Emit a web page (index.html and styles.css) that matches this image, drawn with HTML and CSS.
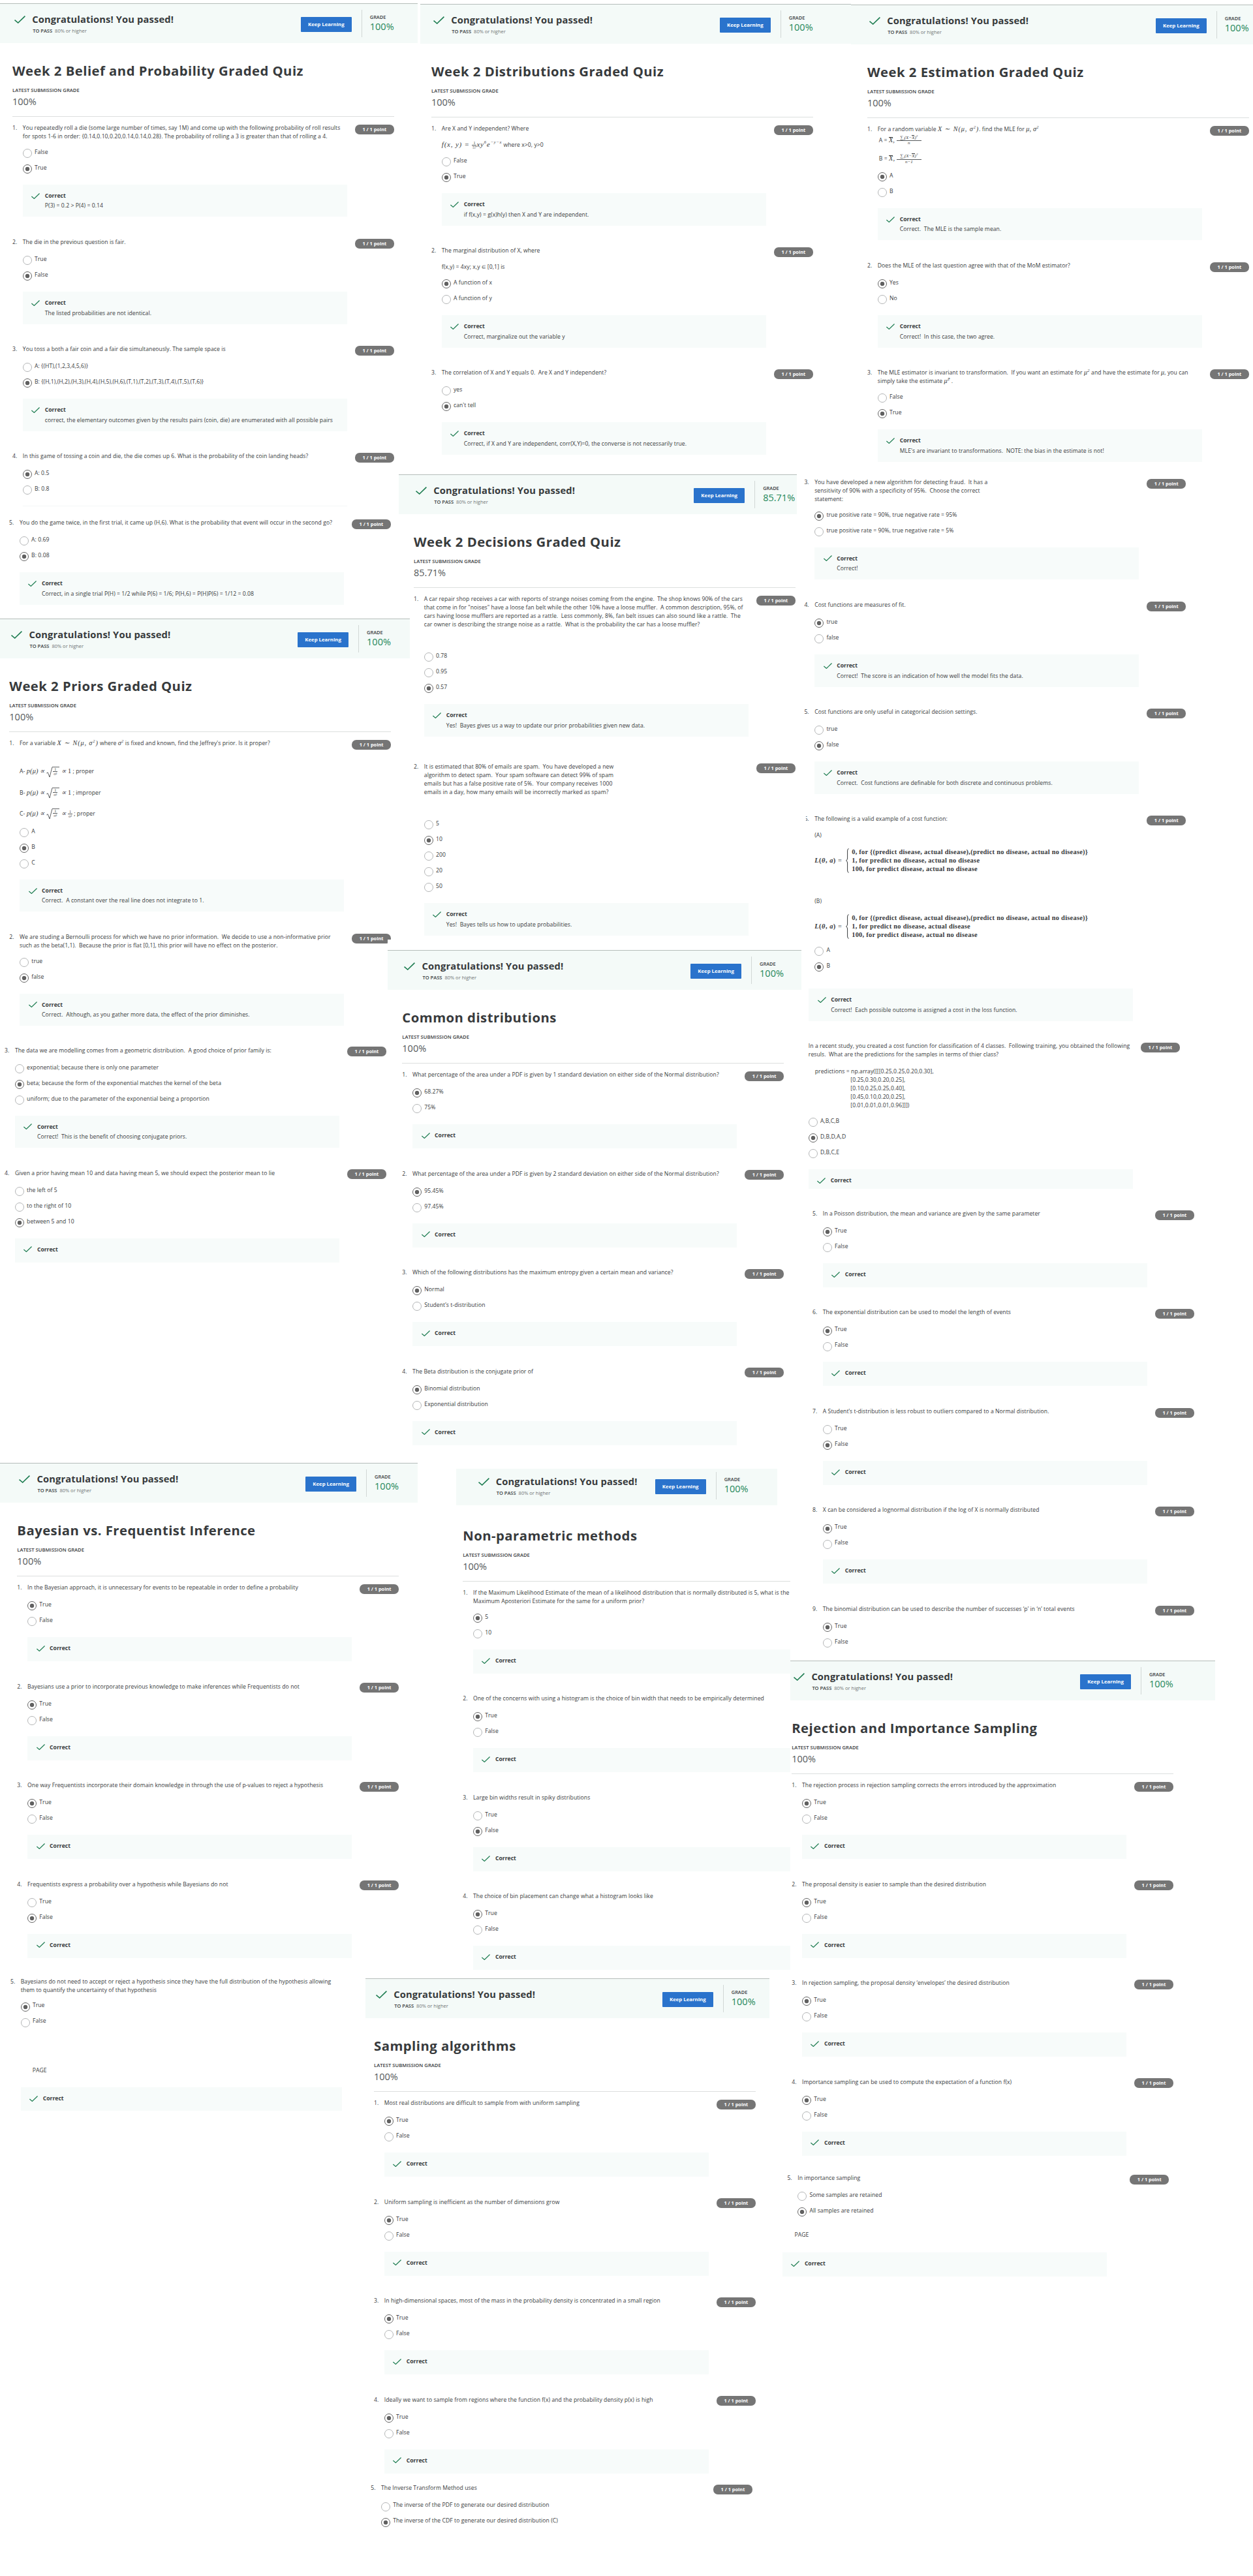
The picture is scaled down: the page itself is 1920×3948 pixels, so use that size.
FILE: index.html
```html
<!DOCTYPE html>
<html lang="en">
<head>
<meta charset="utf-8">
<title>Graded quizzes</title>
<link rel="stylesheet" href="styles.css">
</head>
<body>
<svg class="defs" aria-hidden="true">
  <symbol id="tick" viewBox="0 0 17 12"><path d="M.5 6.6 5.7 11 16.4.7" fill="none" stroke="#1d7c50" stroke-width="1.6"/></symbol>
  <symbol id="brace" viewBox="0 0 5 38"><path d="M4.6.6Q2.6.8 2.6 4V15Q2.6 18.4.5 19 2.6 19.6 2.6 23V34Q2.6 37.2 4.6 37.4" fill="none" stroke="#373a3c" stroke-width="1"/></symbol>
  <symbol id="root" viewBox="0 0 20 17"><path d="M.3 10 2.2 8.8 5 16 9 .6H20" fill="none" stroke="#373a3c" stroke-width=".8"/></symbol>
</svg>
<main class="board">

<article class="sheet sheet--belief">
  <header class="banner"><div class="banner-in"><svg class="tick-lg"><use href="#tick"/></svg><div class="congrats"><h2>Congratulations! You passed!</h2><p><b>TO PASS</b>80% or higher</p></div><button class="learn">Keep Learning</button><div class="grade"><b>GRADE</b><span>100%</span></div></div></header>
  <div class="content">
    <h1>Week 2 Belief and Probability Graded Quiz</h1><p class="latest">LATEST SUBMISSION GRADE</p><p class="score">100%</p><hr>
    <section class="q"><span class="num">1.</span><span class="pill">1 / 1 point</span><div class="prompt">You repeatedly roll a die (some large number of times, say 1M) and come up with the following probability of roll results<br>for spots 1-6 in order: {0.14,0.10,0.20,0.14,0.14,0.28}. The probability of rolling a 3 is greater than that of rolling a 4.</div>
      <ul><li>False</li><li class="on">True</li></ul>
      <div class="fb"><svg><use href="#tick"/></svg><b>Correct</b><p>P(3) = 0.2 &gt; P(4) = 0.14</p></div></section>
    <section class="q"><span class="num">2.</span><span class="pill">1 / 1 point</span><div class="prompt">The die in the previous question is fair.</div>
      <ul><li>True</li><li class="on">False</li></ul>
      <div class="fb"><svg><use href="#tick"/></svg><b>Correct</b><p>The listed probabilities are not identical.</p></div></section>
    <section class="q"><span class="num">3.</span><span class="pill">1 / 1 point</span><div class="prompt">You toss a both a fair coin and a fair die simultaneously. The sample space is</div>
      <ul><li>A: {(HT),(1,2,3,4,5,6)}</li><li class="on">B: {(H,1),(H,2),(H,3),(H,4),(H,5),(H,6),(T,1),(T,2),(T,3),(T,4),(T,5),(T,6)}</li></ul>
      <div class="fb"><svg><use href="#tick"/></svg><b>Correct</b><p>correct, the elementary outcomes given by the results pairs (coin, die) are enumerated with all possible pairs</p></div></section>
    <section class="q"><span class="num">4.</span><span class="pill">1 / 1 point</span><div class="prompt">In this game of tossing a coin and die, the die comes up 6. What is the probability of the coin landing heads?</div>
      <ul><li class="on">A: 0.5</li><li>B: 0.8</li></ul>
      <div class="fb-edge"></div></section>
    <section class="q q--belief5"><span class="num">5.</span><span class="pill">1 / 1 point</span><div class="prompt">You do the game twice, in the first trial, it came up (H,6). What is the probability that event will occur in the second go?</div>
      <ul><li>A: 0.69</li><li class="on">B: 0.08</li></ul>
      <div class="fb"><svg><use href="#tick"/></svg><b>Correct</b><p>Correct, in a single trial P(H) = 1/2 while P(6) = 1/6; P(H,6) = P(H)P(6) = 1/12 = 0.08</p></div></section>
  </div>
</article>

<article class="sheet sheet--distributions">
  <header class="banner"><div class="banner-in"><svg class="tick-lg"><use href="#tick"/></svg><div class="congrats"><h2>Congratulations! You passed!</h2><p><b>TO PASS</b>80% or higher</p></div><button class="learn">Keep Learning</button><div class="grade"><b>GRADE</b><span>100%</span></div></div></header>
  <div class="content">
    <h1>Week 2 Distributions Graded Quiz</h1><p class="latest">LATEST SUBMISSION GRADE</p><p class="score">100%</p><hr>
    <section class="q"><span class="num">1.</span><span class="pill">1 / 1 point</span><div class="prompt">Are X and Y independent? Where
      <p class="para"><span class="math math--pdf">f(x, y) = <span class="frac"><span>1</span><span>57</span></span>xy<sup>6</sup>e<sup>−y−x</sup></span> where x&gt;0, y&gt;0</p></div>
      <ul><li>False</li><li class="on">True</li></ul>
      <div class="fb"><svg><use href="#tick"/></svg><b>Correct</b><p>if f(x,y) = g(x)h(y) then X and Y are independent.</p></div></section>
    <section class="q"><span class="num">2.</span><span class="pill">1 / 1 point</span><div class="prompt">The marginal distribution of X, where
      <p class="para">f(x,y) = 4xy; x,y <span class="sym">∈</span> [0,1] is</p></div>
      <ul><li class="on">A function of x</li><li>A function of y</li></ul>
      <div class="fb"><svg><use href="#tick"/></svg><b>Correct</b><p>Correct, marginalize out the variable y</p></div></section>
    <section class="q"><span class="num">3.</span><span class="pill">1 / 1 point</span><div class="prompt">The correlation of X and Y equals 0.&nbsp; Are X and Y independent?</div>
      <ul><li>yes</li><li class="on">can't tell</li></ul>
      <div class="fb"><svg><use href="#tick"/></svg><b>Correct</b><p>Correct, if X and Y are independent, corr(X,Y)=0, the converse is not necessarily true.</p></div></section>
  </div>
</article>

<article class="sheet sheet--estimation">
  <header class="banner"><div class="banner-in"><svg class="tick-lg"><use href="#tick"/></svg><div class="congrats"><h2>Congratulations! You passed!</h2><p><b>TO PASS</b>80% or higher</p></div><button class="learn">Keep Learning</button><div class="grade"><b>GRADE</b><span>100%</span></div></div></header>
  <div class="content">
    <h1>Week 2 Estimation Graded Quiz</h1><p class="latest">LATEST SUBMISSION GRADE</p><p class="score">100%</p><hr>
    <section class="q"><span class="num">1.</span><span class="pill">1 / 1 point</span><div class="prompt">For a random variable <span class="math math--norm">X ∼ N(μ, σ<sup>2</sup>)</span>. find the MLE for <span class="math">μ, σ<sup>2</sup></span>
      <p class="est">A = <span class="math"><span class="bar">X</span>, <span class="frac frac--wide"><span>∑<sub>i</sub>(X−<span class="bar">X</span>)<sup>2</sup></span><span>n</span></span></span></p>
      <p class="est est--b">B = <span class="math"><span class="bar">X</span>, <span class="frac frac--wide"><span>∑<sub>i</sub>(X−<span class="bar">X</span>)<sup>2</sup></span><span>n−1</span></span></span></p></div>
      <ul><li class="on">A</li><li>B</li></ul>
      <div class="fb"><svg><use href="#tick"/></svg><b>Correct</b><p>Correct.&nbsp; The MLE is the sample mean.</p></div></section>
    <section class="q"><span class="num">2.</span><span class="pill">1 / 1 point</span><div class="prompt">Does the MLE of the last question agree with that of the MoM estimator?</div>
      <ul><li class="on">Yes</li><li>No</li></ul>
      <div class="fb"><svg><use href="#tick"/></svg><b>Correct</b><p>Correct!&nbsp; In this case, the two agree.</p></div></section>
    <section class="q"><span class="num">3.</span><span class="pill">1 / 1 point</span><div class="prompt">The MLE estimator is invariant to transformation.&nbsp; If you want an estimate for <span class="math">μ<sup>2</sup></span> and have the estimate for <span class="math">μ</span>, you can<br>simply take the estimate <span class="math">μ̂<sup>2</sup></span> .</div>
      <ul><li>False</li><li class="on">True</li></ul>
      <div class="fb"><svg><use href="#tick"/></svg><b>Correct</b><p>MLE's are invariant to transformations.&nbsp; NOTE: the bias in the estimate is not!</p></div></section>
  </div>
</article>

<article class="sheet sheet--decisions">
  <header class="banner"><div class="banner-in"><svg class="tick-lg"><use href="#tick"/></svg><div class="congrats"><h2>Congratulations! You passed!</h2><p><b>TO PASS</b>80% or higher</p></div><button class="learn">Keep Learning</button><div class="grade"><b>GRADE</b><span>85.71%</span></div></div></header>
  <div class="content">
    <h1>Week 2 Decisions Graded Quiz</h1><p class="latest">LATEST SUBMISSION GRADE</p><p class="score">85.71%</p><hr>
    <section class="q q--spaced"><span class="num">1.</span><span class="pill">1 / 1 point</span><div class="prompt">A car repair shop receives a car with reports of strange noises coming from the engine.&nbsp; The shop knows 90% of the cars<br>that come in for "noises" have a loose fan belt while the other 10% have a loose muffler.&nbsp; A common description, 95%, of<br>cars having loose mufflers are reported as a rattle.&nbsp; Less commonly, 8%, fan belt issues can also sound like a rattle.&nbsp; The<br>car owner is describing the strange noise as a rattle.&nbsp; What is the probability the car has a loose muffler?</div>
      <ul><li>0.78</li><li>0.95</li><li class="on">0.57</li></ul>
      <div class="fb"><svg><use href="#tick"/></svg><b>Correct</b><p>Yes!&nbsp; Bayes gives us a way to update our prior probabilities given new data.</p></div></section>
    <section class="q q--spaced"><span class="num">2.</span><span class="pill">1 / 1 point</span><div class="prompt">It is estimated that 80% of emails are spam.&nbsp; You have developed a new<br>algorithm to detect spam.&nbsp; Your spam software can detect 99% of spam<br>emails but has a false positive rate of 5%.&nbsp; Your company receives 1000<br>emails in a day, how many emails will be incorrectly marked as spam?</div>
      <ul><li>5</li><li class="on">10</li><li>200</li><li>20</li><li>50</li></ul>
      <div class="fb"><svg><use href="#tick"/></svg><b>Correct</b><p>Yes!&nbsp; Bayes tells us how to update probabilities.</p></div></section>
  </div>
</article>

<article class="sheet sheet--priors">
  <header class="banner"><div class="banner-in"><svg class="tick-lg"><use href="#tick"/></svg><div class="congrats"><h2>Congratulations! You passed!</h2><p><b>TO PASS</b>80% or higher</p></div><button class="learn">Keep Learning</button><div class="grade"><b>GRADE</b><span>100%</span></div></div></header>
  <div class="content">
    <h1>Week 2 Priors Graded Quiz</h1><p class="latest">LATEST SUBMISSION GRADE</p><p class="score">100%</p><hr>
    <section class="q"><span class="num">1.</span><span class="pill">1 / 1 point</span><div class="prompt">For a variable <span class="math math--norm">X ∼ N(μ, σ<sup>2</sup>)</span> where <span class="math">σ<sup>2</sup></span> is fixed and known, find the Jeffrey's prior. Is it proper?
      <div class="priors">
        <p>A- <span class="math">p(μ) ∝ <span class="root"><svg><use href="#root"/></svg><span class="frac"><span>1</span><span>σ²</span></span></span> ∝ <i>1</i></span> ; proper</p>
        <p>B- <span class="math">p(μ) ∝ <span class="root"><svg><use href="#root"/></svg><span class="frac"><span>1</span><span>σ²</span></span></span> ∝ <i>1</i></span> ; improper</p>
        <p>C- <span class="math">p(μ) ∝ <span class="root"><svg><use href="#root"/></svg><span class="frac"><span>1</span><span>σ²</span></span></span> ∝ <span class="frac"><span>1</span><span>σ²</span></span></span> ; proper</p>
      </div></div>
      <ul><li>A</li><li class="on">B</li><li>C</li></ul>
      <div class="fb"><svg><use href="#tick"/></svg><b>Correct</b><p>Correct.&nbsp; A constant over the real line does not integrate to 1.</p></div></section>
    <section class="q"><span class="num">2.</span><span class="pill">1 / 1 point</span><div class="prompt">We are studing a Bernoulli process for which we have no prior information.&nbsp; We decide to use a non-informative prior<br>such as the beta(1,1).&nbsp; Because the prior is flat [0,1], this prior will have no effect on the posterior.</div>
      <ul><li>true</li><li class="on">false</li></ul>
      <div class="fb"><svg><use href="#tick"/></svg><b>Correct</b><p>Correct.&nbsp; Although, as you gather more data, the effect of the prior diminishes.</p></div></section>
    <section class="q q--priors3"><span class="num">3.</span><span class="pill">1 / 1 point</span><div class="prompt">The data we are modelling comes from a geometric distribution.&nbsp; A good choice of prior family is:</div>
      <ul><li>exponential; because there is only one parameter</li><li class="on">beta; because the form of the exponential matches the kernel of the beta</li><li>uniform; due to the parameter of the exponential being a proportion</li></ul>
      <div class="fb"><svg><use href="#tick"/></svg><b>Correct</b><p>Correct!&nbsp; This is the benefit of choosing conjugate priors.</p></div></section>
    <section class="q q--priors4"><span class="num">4.</span><span class="pill">1 / 1 point</span><div class="prompt">Given a prior having mean 10 and data having mean 5, we should expect the posterior mean to lie</div>
      <ul><li>the left of 5</li><li>to the right of 10</li><li class="on">between 5 and 10</li></ul>
      <div class="fb"><svg><use href="#tick"/></svg><b>Correct</b></div></section>
  </div>
</article>

<article class="sheet sheet--common">
  <header class="banner"><div class="banner-in"><svg class="tick-lg"><use href="#tick"/></svg><div class="congrats"><h2>Congratulations! You passed!</h2><p><b>TO PASS</b>80% or higher</p></div><button class="learn">Keep Learning</button><div class="grade"><b>GRADE</b><span>100%</span></div></div></header>
  <div class="content">
    <h1>Common distributions</h1><p class="latest">LATEST SUBMISSION GRADE</p><p class="score">100%</p><hr>
    <section class="q"><span class="num">1.</span><span class="pill">1 / 1 point</span><div class="prompt">What percentage of the area under a PDF is given by 1 standard deviation on either side of the Normal distribution?</div>
      <ul><li class="on">68.27%</li><li>75%</li></ul>
      <div class="fb"><svg><use href="#tick"/></svg><b>Correct</b></div></section>
    <section class="q"><span class="num">2.</span><span class="pill">1 / 1 point</span><div class="prompt">What percentage of the area under a PDF is given by 2 standard deviation on either side of the Normal distribution?</div>
      <ul><li class="on">95.45%</li><li>97.45%</li></ul>
      <div class="fb"><svg><use href="#tick"/></svg><b>Correct</b></div></section>
    <section class="q"><span class="num">3.</span><span class="pill">1 / 1 point</span><div class="prompt">Which of the following distributions has the maximum entropy given a certain mean and variance?</div>
      <ul><li class="on">Normal</li><li>Student’s t-distribution</li></ul>
      <div class="fb"><svg><use href="#tick"/></svg><b>Correct</b></div></section>
    <section class="q"><span class="num">4.</span><span class="pill">1 / 1 point</span><div class="prompt">The Beta distribution is the conjugate prior of</div>
      <ul><li class="on">Binomial distribution</li><li>Exponential distribution</li></ul>
      <div class="fb"><svg><use href="#tick"/></svg><b>Correct</b></div></section>
  </div>
</article>

<article class="sheet sheet--bayes">
  <header class="banner"><div class="banner-in"><svg class="tick-lg"><use href="#tick"/></svg><div class="congrats"><h2>Congratulations! You passed!</h2><p><b>TO PASS</b>80% or higher</p></div><button class="learn">Keep Learning</button><div class="grade"><b>GRADE</b><span>100%</span></div></div></header>
  <div class="content">
    <h1>Bayesian vs. Frequentist Inference</h1><p class="latest">LATEST SUBMISSION GRADE</p><p class="score">100%</p><hr>
    <section class="q"><span class="num">1.</span><span class="pill">1 / 1 point</span><div class="prompt">In the Bayesian approach, it is unnecessary for events to be repeatable in order to define a probability</div>
      <ul><li class="on">True</li><li>False</li></ul>
      <div class="fb"><svg><use href="#tick"/></svg><b>Correct</b></div></section>
    <section class="q"><span class="num">2.</span><span class="pill">1 / 1 point</span><div class="prompt">Bayesians use a prior to incorporate previous knowledge to make inferences while Frequentists do not</div>
      <ul><li class="on">True</li><li>False</li></ul>
      <div class="fb"><svg><use href="#tick"/></svg><b>Correct</b></div></section>
    <section class="q"><span class="num">3.</span><span class="pill">1 / 1 point</span><div class="prompt">One way Frequentists incorporate their domain knowledge in through the use of p-values to reject a hypothesis</div>
      <ul><li class="on">True</li><li>False</li></ul>
      <div class="fb"><svg><use href="#tick"/></svg><b>Correct</b></div></section>
    <section class="q"><span class="num">4.</span><span class="pill">1 / 1 point</span><div class="prompt">Frequentists express a probability over a hypothesis while Bayesians do not</div>
      <ul><li>True</li><li class="on">False</li></ul>
      <div class="fb"><svg><use href="#tick"/></svg><b>Correct</b></div></section>
    <section class="q q--bayes5"><span class="num">5.</span><div class="prompt">Bayesians do not need to accept or reject a hypothesis since they have the full distribution of the hypothesis allowing<br>them to quantify the uncertainty of that hypothesis</div>
      <ul><li class="on">True</li><li>False</li></ul>
      <p class="page">PAGE</p>
      <div class="fb"><svg><use href="#tick"/></svg><b>Correct</b></div></section>
  </div>
</article>

<article class="sheet sheet--nonparam">
  <header class="banner"><div class="banner-in"><svg class="tick-lg"><use href="#tick"/></svg><div class="congrats"><h2>Congratulations! You passed!</h2><p><b>TO PASS</b>80% or higher</p></div><button class="learn">Keep Learning</button><div class="grade"><b>GRADE</b><span>100%</span></div></div></header>
  <div class="content">
    <h1>Non-parametric methods</h1><p class="latest">LATEST SUBMISSION GRADE</p><p class="score">100%</p><hr>
    <section class="q"><span class="num">1.</span><div class="prompt">If the Maximum Likelihood Estimate of the mean of a likelihood distribution that is normally distributed is 5, what is the<br>Maximum Aposteriori Estimate for the same for a uniform prior?</div>
      <ul><li class="on">5</li><li>10</li></ul>
      <div class="fb"><svg><use href="#tick"/></svg><b>Correct</b></div></section>
    <section class="q"><span class="num">2.</span><div class="prompt">One of the concerns with using a histogram is the choice of bin width that needs to be empirically determined</div>
      <ul><li class="on">True</li><li>False</li></ul>
      <div class="fb"><svg><use href="#tick"/></svg><b>Correct</b></div></section>
    <section class="q"><span class="num">3.</span><div class="prompt">Large bin widths result in spiky distributions</div>
      <ul><li>True</li><li class="on">False</li></ul>
      <div class="fb"><svg><use href="#tick"/></svg><b>Correct</b></div></section>
    <section class="q"><span class="num">4.</span><div class="prompt">The choice of bin placement can change what a histogram looks like</div>
      <ul><li class="on">True</li><li>False</li></ul>
      <div class="fb"><svg><use href="#tick"/></svg><b>Correct</b></div></section>
  </div>
</article>

<article class="sheet sheet--sampling">
  <header class="banner"><div class="banner-in"><svg class="tick-lg"><use href="#tick"/></svg><div class="congrats"><h2>Congratulations! You passed!</h2><p><b>TO PASS</b>80% or higher</p></div><button class="learn">Keep Learning</button><div class="grade"><b>GRADE</b><span>100%</span></div></div></header>
  <div class="content">
    <h1>Sampling algorithms</h1><p class="latest">LATEST SUBMISSION GRADE</p><p class="score">100%</p><hr>
    <section class="q"><span class="num">1.</span><span class="pill">1 / 1 point</span><div class="prompt">Most real distributions are difficult to sample from with uniform sampling</div>
      <ul><li class="on">True</li><li>False</li></ul>
      <div class="fb"><svg><use href="#tick"/></svg><b>Correct</b></div></section>
    <section class="q"><span class="num">2.</span><span class="pill">1 / 1 point</span><div class="prompt">Uniform sampling is inefficient as the number of dimensions grow</div>
      <ul><li class="on">True</li><li>False</li></ul>
      <div class="fb"><svg><use href="#tick"/></svg><b>Correct</b></div></section>
    <section class="q"><span class="num">3.</span><span class="pill">1 / 1 point</span><div class="prompt">In high-dimensional spaces, most of the mass in the probability density is concentrated in a small region</div>
      <ul><li class="on">True</li><li>False</li></ul>
      <div class="fb"><svg><use href="#tick"/></svg><b>Correct</b></div></section>
    <section class="q"><span class="num">4.</span><span class="pill">1 / 1 point</span><div class="prompt">Ideally we want to sample from regions where the function f(x) and the probability density p(x) is high</div>
      <ul><li class="on">True</li><li>False</li></ul>
      <div class="fb"><svg><use href="#tick"/></svg><b>Correct</b></div></section>
    <section class="q q--sampling5"><span class="num">5.</span><span class="pill">1 / 1 point</span><div class="prompt">The Inverse Transform Method uses</div>
      <ul><li>The inverse of the PDF to generate our desired distribution</li><li class="on">The inverse of the CDF to generate our desired distribution (C)</li></ul></section>
  </div>
</article>

<article class="sheet sheet--rejection">
  <header class="banner"><div class="banner-in"><svg class="tick-lg"><use href="#tick"/></svg><div class="congrats"><h2>Congratulations! You passed!</h2><p><b>TO PASS</b>80% or higher</p></div><button class="learn">Keep Learning</button><div class="grade"><b>GRADE</b><span>100%</span></div></div></header>
  <div class="content">
    <h1>Rejection and Importance Sampling</h1><p class="latest">LATEST SUBMISSION GRADE</p><p class="score">100%</p><hr>
    <section class="q"><span class="num">1.</span><span class="pill">1 / 1 point</span><div class="prompt">The rejection process in rejection sampling corrects the errors introduced by the approximation</div>
      <ul><li class="on">True</li><li>False</li></ul>
      <div class="fb"><svg><use href="#tick"/></svg><b>Correct</b></div></section>
    <section class="q"><span class="num">2.</span><span class="pill">1 / 1 point</span><div class="prompt">The proposal density is easier to sample than the desired distribution</div>
      <ul><li class="on">True</li><li>False</li></ul>
      <div class="fb"><svg><use href="#tick"/></svg><b>Correct</b></div></section>
    <section class="q"><span class="num">3.</span><span class="pill">1 / 1 point</span><div class="prompt">In rejection sampling, the proposal density ‘envelopes’ the desired distribution</div>
      <ul><li class="on">True</li><li>False</li></ul>
      <div class="fb"><svg><use href="#tick"/></svg><b>Correct</b></div></section>
    <section class="q"><span class="num">4.</span><span class="pill">1 / 1 point</span><div class="prompt">Importance sampling can be used to compute the expectation of a function f(x)</div>
      <ul><li class="on">True</li><li>False</li></ul>
      <div class="fb"><svg><use href="#tick"/></svg><b>Correct</b></div></section>
    <section class="q q--rejection5"><span class="num">5.</span><span class="pill">1 / 1 point</span><div class="prompt">In importance sampling</div>
      <ul><li>Some samples are retained</li><li class="on">All samples are retained</li></ul>
      <p class="page">PAGE</p>
      <div class="fb"><svg><use href="#tick"/></svg><b>Correct</b></div></section>
  </div>
</article>

<article class="sheet sheet--cost">
  <div class="content">
    <section class="q"><span class="num">3.</span><span class="pill">1 / 1 point</span><div class="prompt">You have developed a new algorithm for detecting fraud.&nbsp; It has a<br>sensitivity of 90% with a specificity of 95%.&nbsp; Choose the correct<br>statement:</div>
      <ul><li class="on">true positive rate = 90%, true negative rate = 95%</li><li>true positive rate = 90%, true negative rate = 5%</li></ul>
      <div class="fb"><svg><use href="#tick"/></svg><b>Correct</b><p>Correct!</p></div></section>
    <section class="q"><span class="num">4.</span><span class="pill">1 / 1 point</span><div class="prompt">Cost functions are measures of fit.</div>
      <ul><li class="on">true</li><li>false</li></ul>
      <div class="fb"><svg><use href="#tick"/></svg><b>Correct</b><p>Correct!&nbsp; The score is an indication of how well the model fits the data.</p></div></section>
    <section class="q"><span class="num">5.</span><span class="pill">1 / 1 point</span><div class="prompt">Cost functions are only useful in categorical decision settings.</div>
      <ul><li>true</li><li class="on">false</li></ul>
      <div class="fb"><svg><use href="#tick"/></svg><b>Correct</b><p>Correct.&nbsp; Cost functions are definable for both discrete and continuous problems.</p></div></section>
    <section class="q q--cost6"><span class="num">6.</span><span class="pill">1 / 1 point</span><div class="prompt">The following is a valid example of a cost function:
      <p class="para">(A)</p>
      <div class="loss"><span class="lhs"><em>L</em>(<em>θ</em>, <em>a</em>) <span class="eq">=</span></span><svg><use href="#brace"/></svg><div class="cases"><p>0, for {(predict disease, actual disease),(predict no disease, actual no disease)}</p><p>1, for predict no disease, actual no disease</p><p>100, for predict disease, actual no disease</p></div></div>
      <p class="para para--b">(B)</p>
      <div class="loss"><span class="lhs"><em>L</em>(<em>θ</em>, <em>a</em>) <span class="eq">=</span></span><svg><use href="#brace"/></svg><div class="cases"><p>0, for {(predict disease, actual disease),(predict no disease, actual no disease)}</p><p>1, for predict no disease, actual disease</p><p>100, for predict disease, actual no disease</p></div></div></div>
      <ul><li>A</li><li class="on">B</li></ul>
      <div class="fb"><svg><use href="#tick"/></svg><b>Correct</b><p>Correct!&nbsp; Each possible outcome is assigned a cost in the loss function.</p></div></section>
    <section class="q q--cost7"><span class="num"></span><span class="pill">1 / 1 point</span><div class="prompt">In a recent study, you created a cost function for classification of 4 classes.&nbsp; Following training, you obtained the following<br>resuls.&nbsp; What are the predictions for the samples in terms of thier class?
      <div class="array"><p>predictions = np.array([[[0.25,0.25,0.20,0.30],</p><p>[0.25,0.30,0.20,0.25],</p><p>[0.10,0.25,0.25,0.40],</p><p>[0.45,0.10,0.20,0.25],</p><p>[0.01,0.01,0.01,0.96]]])</p></div></div>
      <ul><li>A,B,C,B</li><li class="on">D,B,D,A,D</li><li>D,B,C,E</li></ul>
      <div class="fb"><svg><use href="#tick"/></svg><b>Correct</b></div></section>
  </div>
</article>

<article class="sheet sheet--common2">
  <div class="content">
    <section class="q"><span class="num">5.</span><span class="pill">1 / 1 point</span><div class="prompt">In a Poisson distribution, the mean and variance are given by the same parameter</div>
      <ul><li class="on">True</li><li>False</li></ul>
      <div class="fb"><svg><use href="#tick"/></svg><b>Correct</b></div></section>
    <section class="q"><span class="num">6.</span><span class="pill">1 / 1 point</span><div class="prompt">The exponential distribution can be used to model the length of events</div>
      <ul><li class="on">True</li><li>False</li></ul>
      <div class="fb"><svg><use href="#tick"/></svg><b>Correct</b></div></section>
    <section class="q"><span class="num">7.</span><span class="pill">1 / 1 point</span><div class="prompt">A Student’s t-distribution is less robust to outliers compared to a Normal distribution.</div>
      <ul><li>True</li><li class="on">False</li></ul>
      <div class="fb"><svg><use href="#tick"/></svg><b>Correct</b></div></section>
    <section class="q"><span class="num">8.</span><span class="pill">1 / 1 point</span><div class="prompt">X can be considered a lognormal distribution if the log of X is normally distributed</div>
      <ul><li class="on">True</li><li>False</li></ul>
      <div class="fb"><svg><use href="#tick"/></svg><b>Correct</b></div></section>
    <section class="q"><span class="num">9.</span><span class="pill">1 / 1 point</span><div class="prompt">The binomial distribution can be used to describe the number of successes ‘p’ in ‘n’ total events</div>
      <ul><li class="on">True</li><li>False</li></ul></section>
  </div>
</article>

</main>
</body>
</html>
```
FILE: styles.css
```css
* { box-sizing: border-box; margin: 0; padding: 0; }

body {
  background: #fff;
  color: #373a3c;
  font: 8.6px/13px "Open Sans", "Noto Sans", sans-serif;
  letter-spacing: .07px;
}

.defs { position: absolute; width: 0; height: 0; }

.board { position: relative; width: 1920px; height: 3948px; overflow: hidden; }

/* Each quiz is a sheet pinned freely on the board. */
.sheet { position: absolute; --inset: 20px; }
.sheet--belief { left: 0; top: 5px; width: 640px; --inset: 19px; }
.sheet--distributions { left: 644px; top: 6px; width: 660px; --inset: 17px; }
.sheet--estimation { left: 1304px; top: 7px; width: 616px; --inset: 25px; }
.sheet--decisions { left: 611px; top: 727px; width: 610px; --inset: 23px; }
.sheet--priors { left: 0; top: 948px; width: 628px; --inset: 14.3px; }
.sheet--common { left: 594px; top: 1440px; width: 634px; --inset: 22.3px; padding-top: 16px; background: #fff; }
.sheet--bayes { left: 0; top: 2242px; width: 640px; --inset: 26.3px; }
.sheet--nonparam { left: 699px; top: 2251px; width: 512px; height: 769px; --inset: 10.2px; overflow: hidden; }
.sheet--sampling { left: 560px; top: 3032px; width: 619px; --inset: 13px; }
.sheet--rejection { left: 1211px; top: 2545px; width: 651px; --inset: 2.2px; }
.sheet--cost { left: 1212px; top: 733px; width: 640px; --inset: 20.4px; }
.sheet--common2 { left: 1225px; top: 1854px; width: 640px; --inset: 20px; }

/* Result banner */
.banner {
  height: 61px;
  border-top: 1px solid #b5bdba;
  background: #f4faf8;
  overflow: hidden;
}
.banner-in { display: flex; align-items: flex-start; margin-left: var(--inset); width: 620px; }
.tick-lg { flex: none; width: 17px; height: 12px; margin: 18px 0 0 3px; }
.congrats { flex: none; width: 411.6px; padding: 12.5px 0 0 10.2px; }
.congrats h2 { font-size: 14.7px; font-weight: 700; line-height: 20px; letter-spacing: .14px; white-space: nowrap; }
.congrats p { margin: 2.7px 0 0 1px; font-size: 7.5px; line-height: 12px; color: #6f7375; letter-spacing: 0; }
.congrats b { margin-right: 4px; font-weight: 600; color: #373a3c; }
.learn {
  flex: none;
  width: 78.4px;
  height: 23px;
  margin: 19.7px 0 0 10px;
  border: 0;
  border-radius: 1px;
  background: #2a73cc;
  color: #fff;
  font: 700 7.8px/22px "Open Sans", sans-serif;
  text-align: center;
}
.grade {
  flex: none;
  margin: 9px 0 0 14.8px;
  padding: 5px 0 0 12px;
  height: 42px;
  border-left: 1px solid #d2d8d6;
}
.grade b { display: block; font-size: 7.4px; line-height: 12px; font-weight: 600; letter-spacing: 0; }
.grade span { display: block; font-size: 14.5px; line-height: 18px; letter-spacing: 0; color: #25885a; }
.sheet--decisions .congrats { width: 399px; }

/* Quiz heading */
.content { margin-left: var(--inset); width: 585px; }
h1 { padding-top: 29px; font-size: 20.3px; line-height: 26px; height: 56px; font-weight: 700; letter-spacing: .48px; white-space: nowrap; }
.latest { margin-top: 9.5px; font-size: 7.6px; line-height: 12px; font-weight: 600; letter-spacing: .03px; }
.score { margin-top: 3px; font-size: 14.5px; line-height: 18px; letter-spacing: 0; color: #55595b; }
hr { height: 1px; margin: 13px 0 11.6px; border: 0; background: #dcdfde; }

/* Question: number | prompt, answers, feedback | points */
.q { display: grid; grid-template-columns: 15.8px 497px 60px; column-gap: 0; }
.q > * { grid-column: 2; }
.q + .q { margin-top: 32.5px; }
.q > .num { grid-column: 1; grid-row: 1; }
.q > .pill {
  grid-column: 3;
  grid-row: 1;
  width: 60px;
  height: 15px;
  margin: .8px 0 0 12px;
  border-radius: 7px;
  background: #757575;
  color: #fff;
  font-size: 7.4px;
  line-height: 14.5px;
  font-weight: 700;
  letter-spacing: 0;
  text-align: center;
}
.q > .prompt { grid-row: 1; min-height: 15.3px; margin-bottom: 5.7px; white-space: nowrap; }
.para { margin-top: 12.2px; }

.q ul { list-style: none; }
.q li { position: relative; height: 24px; padding-left: 18.2px; line-height: 23px; white-space: nowrap; }
.q li::before {
  content: "";
  position: absolute;
  left: 0;
  top: 6.2px;
  width: 12px;
  height: 12px;
  border: 1px solid #b4b6b7;
  border-radius: 50%;
}
.q li.on::before {
  border: 1.2px solid #666;
  background: radial-gradient(circle, #616161 0 2.9px, transparent 3.6px);
}

.fb {
  display: grid;
  grid-template-columns: 13px 1fr;
  column-gap: 7.5px;
  align-content: start;
  height: 37px;
  margin-top: 13px;
  padding: 11px 0 0 13.5px;
  background: #f7fbfa;
  white-space: nowrap;
}
.fb svg { width: 13px; height: 9.2px; margin-top: 1.8px; }
.fb b { font-weight: 700; letter-spacing: 0; }
.fb p { grid-column: 2; margin-top: 2.7px; }
.fb:has(p) { height: 49.7px; }
.fb-edge { height: 1px; margin-top: 13px; background: #f4f8f7; }
.page { height: 13px; }

/* Sheet specific spacing */
.q--belief5.q { margin: 19px 0 0 -4.9px; }
.q--spaced .prompt { padding-bottom: 24.3px; }
.q--spaced + .q--spaced { margin-top: 40.5px; }
.q--priors3.q { margin: 31.2px 0 0 -7.2px; }
.q--priors4.q { margin-left: -7.2px; }
.q--bayes5.q { margin: 30.2px 0 0 -10.4px; }
.q--bayes5 .page { margin: 56.9px 0 6.2px 18px; }
.q--bayes5 .fb { width: 492px; height: 35.5px; }
.q--sampling5.q { margin: 16.8px 0 0 -4.8px; }
.q--rejection5.q { margin: 28.5px 0 0 -6.8px; }
.q--rejection5 .page { margin: 18.3px 0 6.8px -4.8px; }
.q--rejection5 .fb { width: 497px; margin-left: -23.3px; }
.q--cost6 .num { clip-path: inset(0 0 0 2.5px); }
.q--cost6 .fb { margin: 22px 9px 0 -9px; }
.q--cost7.q { margin-left: -9.4px; }
.q--cost7 .fb { height: 30.4px; }

/* The non-parametric banner is cut shorter and sits further right. */
.sheet--nonparam .banner { width: 492px; height: 56px; border: 0; }
.sheet--nonparam .banner-in { margin: -4px 0 0 30.5px; width: 460px; }
.sheet--nonparam .congrats { width: 240px; }
.sheet--nonparam .learn { margin-left: 14px; }
.sheet--nonparam h1 { padding-top: 33px; height: 60px; }

/* Formulas */
.math { font-family: "Liberation Serif", serif; font-style: italic; font-size: 10.2px; line-height: 10px; letter-spacing: .2px; }
.math i { font-style: normal; }
.math sup, .math sub { font-size: 6.5px; line-height: 0; }
.math--norm { letter-spacing: .9px; }
.math--pdf { font-size: 11px; letter-spacing: .8px; }
.sym { font-family: "DejaVu Sans", sans-serif; font-size: 7.5px; line-height: 8px; }
.frac {
  display: inline-flex;
  flex-direction: column;
  align-items: center;
  min-width: 7px;
  vertical-align: middle;
  font-size: 6px;
  line-height: 6px;
  font-style: normal;
  letter-spacing: 0;
}
.frac > span:first-child { align-self: stretch; text-align: center; border-bottom: 1px solid #55595b; }
.frac--wide { font-size: 7px; line-height: 7.5px; font-style: italic; }
.frac--wide > span:first-child { width: 38px; }
.frac sup, .frac sub { font-size: 5px; }
.bar { border-top: 1px solid #373a3c; line-height: 7px; display: inline-block; }
.est { height: 17px; margin: 1.5px 0 0 2px; line-height: 17px; }
.est--b { margin-top: 11.5px; }
.priors { margin-top: 26.4px; display: grid; gap: 12.3px; }
.priors p { height: 20px; line-height: 20px; }
.root { position: relative; display: inline-block; width: 20px; height: 17px; padding-left: 10px; vertical-align: middle; line-height: 14px; }
.root svg { position: absolute; left: 0; top: 0; width: 20px; height: 17px; }
.loss { display: flex; align-items: center; height: 39px; margin-top: 12px; font: 700 10.4px/13px "Liberation Serif", serif; letter-spacing: .26px; }
.loss .lhs { width: 46px; letter-spacing: .5px; }
.loss .eq { font-weight: 400; }
.loss svg { width: 5px; height: 38px; margin: 0 4px 0 2px; }
.para--b { margin-top: 37px; }
.array { margin: 12.8px 0 0 10px; }
.array p + p { padding-left: 54.5px; }
```
